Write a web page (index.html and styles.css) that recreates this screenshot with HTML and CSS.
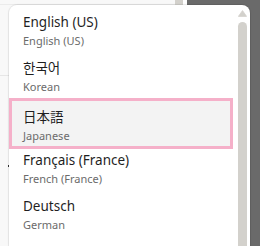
FILE: index.html
```html
<!DOCTYPE html>
<html lang="en">
<head>
<meta charset="utf-8">
<title>Language menu</title>
<link rel="stylesheet" href="styles.css">
</head>
<body>
<div class="backdrop">
  <div class="page">
    <div class="page-top"></div>
    <div class="page-rule"></div>
    <div class="page-caret"></div>
  </div>
  <div class="page-scroll"></div>
  <div class="gutter"></div>
  <div class="panel"></div>
</div>
<div class="menu">
  <ul class="list">
    <li class="item"><span class="title">English (US)</span><span class="sub">English (US)</span></li>
    <li class="item"><span class="title" lang="ko">한국어</span><span class="sub">Korean</span></li>
    <li class="item selected"><span class="title" lang="ja">日本語</span><span class="sub">Japanese</span></li>
    <li class="item"><span class="title">Français (France)</span><span class="sub">French (France)</span></li>
    <li class="item"><span class="title">Deutsch</span><span class="sub">German</span></li>
  </ul>
  <div class="scrollbar">
    <svg class="arrow" width="9" height="7" viewBox="0 0 9 7"><path d="M4.5 0.6 L8.6 6.4 L0.4 6.4 Z" fill="#d3d1cc" stroke="#d3d1cc" stroke-width="0.8" stroke-linejoin="round"/></svg>
    <div class="thumb"></div>
  </div>
</div>
</body>
</html>
```

FILE: styles.css
```css
html, body {
  margin: 0;
  padding: 0;
}
body {
  width: 260px;
  height: 246px;
  overflow: hidden;
  position: relative;
  font-family: "Noto Sans", "Noto Sans CJK KR", sans-serif;
  background: #ffffff;
}
.backdrop {
  display: flex;
  height: 246px;
}
.page {
  width: 175px;
  background: #f8f8f8;
  display: flex;
  flex-direction: column;
}
.page-top {
  height: 4px;
  border-bottom: 1px solid #ebebeb;
}
.page-rule {
  margin-top: 70px;
  height: 1px;
  background: #e6e6e6;
}
.page-caret {
  margin-top: 89px;
  margin-left: 8px;
  width: 1px;
  height: 2px;
  background: #333333;
}
.page-scroll {
  width: 8px;
  background: #d3d1cc;
}
.gutter {
  width: 4px;
  background: #ffffff;
}
.panel {
  flex: 1;
  background: #6a6a6a;
}
.menu {
  position: absolute;
  left: 9px;
  top: 5px;
  width: 241px;
  height: 241px;
  overflow: hidden;
  background: #ffffff;
  border-radius: 8px 8px 0 0;
  box-shadow: 0 0 0 1px rgba(0, 0, 0, 0.06), 0 0 3px rgba(0, 0, 0, 0.06);
  display: flex;
}
.list {
  list-style: none;
  margin: 0;
  padding: 1px 0 0 0;
  width: 224px;
}
.item {
  box-sizing: border-box;
  height: 46px;
  padding: 6px 0 3px 14px;
  display: flex;
  flex-direction: column;
}
.item.selected {
  height: 51px;
  margin-bottom: -5px;
  border: 3px solid #f5b0c9;
  background: #f3f3f3;
  padding-left: 11px;
  position: relative;
}
.title {
  font-size: 13.5px;
  line-height: 20px;
  color: #1f1f1f;
  white-space: nowrap;
}
.title[lang="ko"] {
  font-family: "Noto Sans", "Noto Sans CJK KR", sans-serif;
}
.title[lang="ja"] {
  font-family: "Noto Sans", "Noto Sans CJK JP", sans-serif;
}
.sub {
  margin-top: 1px;
  font-size: 11px;
  line-height: 16px;
  color: #6b6b6b;
  white-space: nowrap;
}
.scrollbar {
  width: 9px;
  margin-left: 5px;
  padding-top: 5px;
  display: flex;
  flex-direction: column;
  align-items: center;
}
.arrow {
  display: block;
}
.thumb {
  margin-top: 5px;
  width: 9px;
  flex: 1;
  background: #d3d1cc;
  border-radius: 4.5px 4.5px 0 0;
}
```
